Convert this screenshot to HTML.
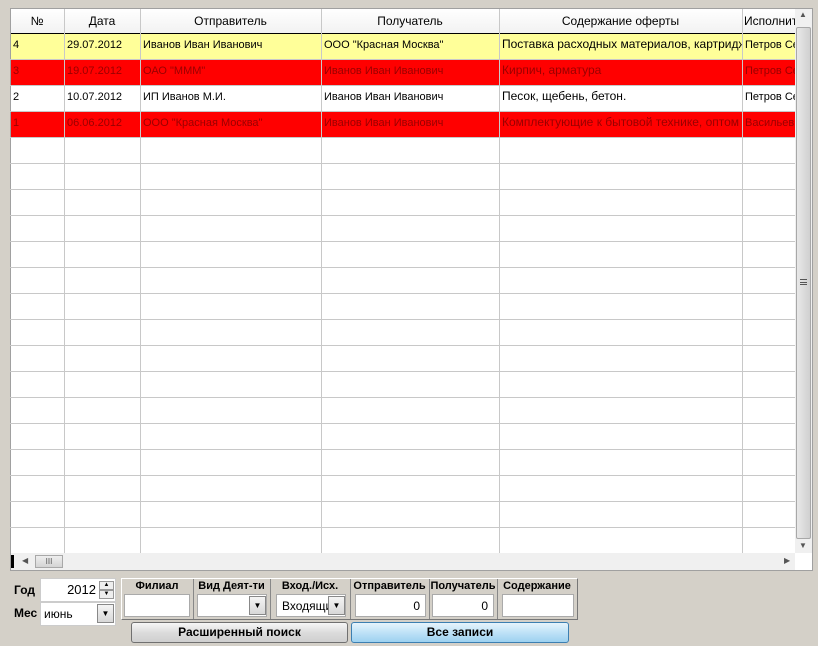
<!DOCTYPE html>
<html><head><meta charset="utf-8"><style>
*{box-sizing:border-box;margin:0;padding:0}
body{width:818px;height:646px;background:#d4d0c8;font-family:"Liberation Sans",sans-serif;position:relative;overflow:hidden}
.a{position:absolute}
.grid{left:10px;top:8px;width:803px;height:563px;background:#fff;border:1px solid #a0a0a0}
.hd{font-size:12px;color:#000;text-align:center;top:8px;height:26px;line-height:26px}
.c{font-size:11px;white-space:nowrap;overflow:hidden;padding-left:3px}
.vl{width:1px;background:#c8c8c8}
.hl{height:1px;background:#c8c8c8;left:10px;width:785px}
.lbl{font-size:12px;font-weight:bold}
.box{background:#fff;border:1px solid #8a8a8a}
.btn{border:1px solid #707070;border-radius:3px;font-size:12px;font-weight:bold;text-align:center;line-height:19px}
.dd{width:17px;height:19px;background:linear-gradient(#f4f4f4,#d8d8d8);border:1px solid #888;font-size:8px;text-align:center;line-height:17px}
</style></head><body>
<div class="a grid"></div>
<div class="a" style="left:11px;top:9px;width:784px;height:24px;background:linear-gradient(#fff,#f2f2f2)"></div>
<div class="a" style="left:11px;top:33px;width:784px;height:1px;background:#000"></div>
<!-- rows -->
<div class="a" style="left:11px;top:34px;width:784px;height:25px;background:#ffff99"></div>
<div class="a" style="left:11px;top:60px;width:784px;height:25px;background:#ff0000"></div>
<div class="a" style="left:11px;top:112px;width:784px;height:25px;background:#ff0000"></div>
<!-- horizontal lines -->
<div class="a hl" style="top:59px"></div><div class="a hl" style="top:85px"></div><div class="a hl" style="top:111px"></div><div class="a hl" style="top:137px"></div><div class="a hl" style="top:163px"></div><div class="a hl" style="top:189px"></div><div class="a hl" style="top:215px"></div><div class="a hl" style="top:241px"></div><div class="a hl" style="top:267px"></div><div class="a hl" style="top:293px"></div><div class="a hl" style="top:319px"></div><div class="a hl" style="top:345px"></div><div class="a hl" style="top:371px"></div><div class="a hl" style="top:397px"></div><div class="a hl" style="top:423px"></div><div class="a hl" style="top:449px"></div><div class="a hl" style="top:475px"></div><div class="a hl" style="top:501px"></div><div class="a hl" style="top:527px"></div>
<!-- vertical lines -->
<div class="a vl" style="left:64px;top:9px;height:544px"></div>
<div class="a vl" style="left:140px;top:9px;height:544px"></div>
<div class="a vl" style="left:321px;top:9px;height:544px"></div>
<div class="a vl" style="left:499px;top:9px;height:544px"></div>
<div class="a vl" style="left:742px;top:9px;height:544px"></div>
<!-- headers -->
<div class="a hd" style="left:10px;width:54px">№</div>
<div class="a hd" style="left:64px;width:76px">Дата</div>
<div class="a hd" style="left:140px;width:181px">Отправитель</div>
<div class="a hd" style="left:321px;width:178px">Получатель</div>
<div class="a hd" style="left:499px;width:243px">Содержание оферты</div>
<div class="a hd" style="left:742px;width:53px;text-align:left;padding-left:2px;overflow:hidden;white-space:nowrap">Исполнитель</div>
<!-- row data -->
<div class="a c" style="left:10px;top:39px;width:54px">4</div>
<div class="a c" style="left:64px;top:39px;width:76px">29.07.2012</div>
<div class="a c" style="left:140px;top:39px;width:181px">Иванов Иван Иванович</div>
<div class="a c" style="left:321px;top:39px;width:178px">ООО "Красная Москва"</div>
<div class="a c" style="left:499px;top:37px;width:243px;font-size:12px">Поставка расходных материалов, картриджей</div>
<div class="a c" style="left:742px;top:39px;width:53px">Петров Сергей</div>

<div class="a c" style="left:10px;top:65px;width:54px;color:#900">3</div>
<div class="a c" style="left:64px;top:65px;width:76px;color:#900">19.07.2012</div>
<div class="a c" style="left:140px;top:65px;width:181px;color:#900">ОАО "МММ"</div>
<div class="a c" style="left:321px;top:65px;width:178px;color:#900">Иванов Иван Иванович</div>
<div class="a c" style="left:499px;top:63px;width:243px;font-size:12px;color:#900">Кирпич, арматура</div>
<div class="a c" style="left:742px;top:65px;width:53px;color:#900">Петров Сергей</div>

<div class="a c" style="left:10px;top:91px;width:54px">2</div>
<div class="a c" style="left:64px;top:91px;width:76px">10.07.2012</div>
<div class="a c" style="left:140px;top:91px;width:181px">ИП Иванов М.И.</div>
<div class="a c" style="left:321px;top:91px;width:178px">Иванов Иван Иванович</div>
<div class="a c" style="left:499px;top:89px;width:243px;font-size:12px">Песок, щебень, бетон.</div>
<div class="a c" style="left:742px;top:91px;width:53px">Петров Сергей</div>

<div class="a c" style="left:10px;top:117px;width:54px;color:#900">1</div>
<div class="a c" style="left:64px;top:117px;width:76px;color:#900">06.06.2012</div>
<div class="a c" style="left:140px;top:117px;width:181px;color:#900">ООО "Красная Москва"</div>
<div class="a c" style="left:321px;top:117px;width:178px;color:#900">Иванов Иван Иванович</div>
<div class="a c" style="left:499px;top:115px;width:243px;font-size:12px;color:#900">Комплектующие к бытовой технике, оптом</div>
<div class="a c" style="left:742px;top:117px;width:53px;color:#900">Васильев</div>
<!-- vertical scrollbar -->
<div class="a" style="left:795px;top:9px;width:17px;height:544px;background:#f0f0f0"></div>
<div class="a" style="left:799px;top:10px;font-size:8px;color:#555">▲</div>
<div class="a" style="left:799px;top:541px;font-size:8px;color:#555">▼</div>
<div class="a" style="left:796px;top:27px;width:15px;height:512px;background:linear-gradient(90deg,#e8e8e8,#d0d0d0);border:1px solid #a8a8a8;border-radius:2px"></div>
<div class="a" style="left:800px;top:279px;width:7px;height:6px;border-top:1px solid #555;border-bottom:1px solid #555"></div>
<div class="a" style="left:800px;top:282px;width:7px;height:1px;background:#555"></div>
<!-- horizontal scrollbar -->
<div class="a" style="left:11px;top:553px;width:784px;height:17px;background:#f0f0f0"></div>
<div class="a" style="left:11px;top:555px;width:3px;height:13px;background:#000"></div>
<div class="a" style="left:22px;top:556px;font-size:8px;color:#555">◀</div>
<div class="a" style="left:35px;top:555px;width:28px;height:13px;background:linear-gradient(#eee,#d4d4d4);border:1px solid #a8a8a8;font-size:8px;text-align:center;line-height:11px;color:#555">III</div>
<div class="a" style="left:784px;top:556px;font-size:8px;color:#555">▶</div>
<!-- bottom -->
<div class="a lbl" style="left:14px;top:583px">Год</div>
<div class="a lbl" style="left:14px;top:606px">Мес</div>
<div class="a box" style="left:40px;top:578px;width:76px;height:24px;border-color:#ccc"></div>
<div class="a" style="left:40px;top:582px;width:56px;text-align:right;font-size:13px">2012</div>
<div class="a" style="left:99px;top:581px;width:15px;height:9px;border:1px solid #999;background:#eee;font-size:6px;text-align:center;line-height:7px">▲</div>
<div class="a" style="left:99px;top:590px;width:15px;height:9px;border:1px solid #999;background:#eee;font-size:6px;text-align:center;line-height:7px">▼</div>
<div class="a box" style="left:40px;top:602px;width:76px;height:24px;border-color:#ccc"></div>
<div class="a" style="left:44px;top:607px;font-size:12px">июнь</div>
<div class="a dd" style="left:97px;top:604px">▼</div>

<div class="a" style="left:121px;top:578px;width:457px;height:42px;border:1px solid #888;border-top-color:#fff;border-left-color:#fff;border-right-color:#777;border-bottom-color:#777"></div>
<div class="a" style="left:193px;top:579px;width:1px;height:40px;background:#888"></div>
<div class="a" style="left:270px;top:579px;width:1px;height:40px;background:#888"></div>
<div class="a" style="left:350px;top:579px;width:1px;height:40px;background:#888"></div>
<div class="a" style="left:429px;top:579px;width:1px;height:40px;background:#888"></div>
<div class="a" style="left:497px;top:579px;width:1px;height:40px;background:#888"></div>
<div class="a lbl" style="left:121px;top:580px;width:72px;text-align:center;font-size:11px">Филиал</div>
<div class="a lbl" style="left:193px;top:580px;width:77px;text-align:center;font-size:11px">Вид Деят-ти</div>
<div class="a lbl" style="left:270px;top:580px;width:80px;text-align:center;font-size:11px">Вход./Исх.</div>
<div class="a lbl" style="left:350px;top:580px;width:79px;text-align:center;font-size:11px">Отправитель</div>
<div class="a lbl" style="left:429px;top:580px;width:68px;text-align:center;font-size:11px">Получатель</div>
<div class="a lbl" style="left:497px;top:580px;width:80px;text-align:center;font-size:11px">Содержание</div>
<div class="a box" style="left:124px;top:594px;width:66px;height:23px;border-color:#aaa"></div>
<div class="a box" style="left:197px;top:594px;width:70px;height:23px;border-color:#aaa"></div>
<div class="a dd" style="left:249px;top:596px">▼</div>
<div class="a box" style="left:276px;top:594px;width:70px;height:23px;border-color:#aaa;font-size:12px;padding:4px 0 0 5px;overflow:hidden;white-space:nowrap">Входящи</div>
<div class="a dd" style="left:328px;top:596px">▼</div>
<div class="a box" style="left:355px;top:594px;width:71px;height:23px;border-color:#aaa;font-size:12px;text-align:right;padding:4px 5px 0 0">0</div>
<div class="a box" style="left:432px;top:594px;width:62px;height:23px;border-color:#aaa;font-size:12px;text-align:right;padding:4px 5px 0 0">0</div>
<div class="a box" style="left:502px;top:594px;width:72px;height:23px;border-color:#aaa"></div>

<div class="a btn" style="left:131px;top:622px;width:217px;height:21px;background:linear-gradient(#f6f6f6,#dcdcdc 50%,#cfcfcf)">Расширенный поиск</div>
<div class="a btn" style="left:351px;top:622px;width:218px;height:21px;background:linear-gradient(#e6f4fc,#bfe2f7 50%,#9dd1f0);border-color:#3c7fb1">Все записи</div>
</body></html>
